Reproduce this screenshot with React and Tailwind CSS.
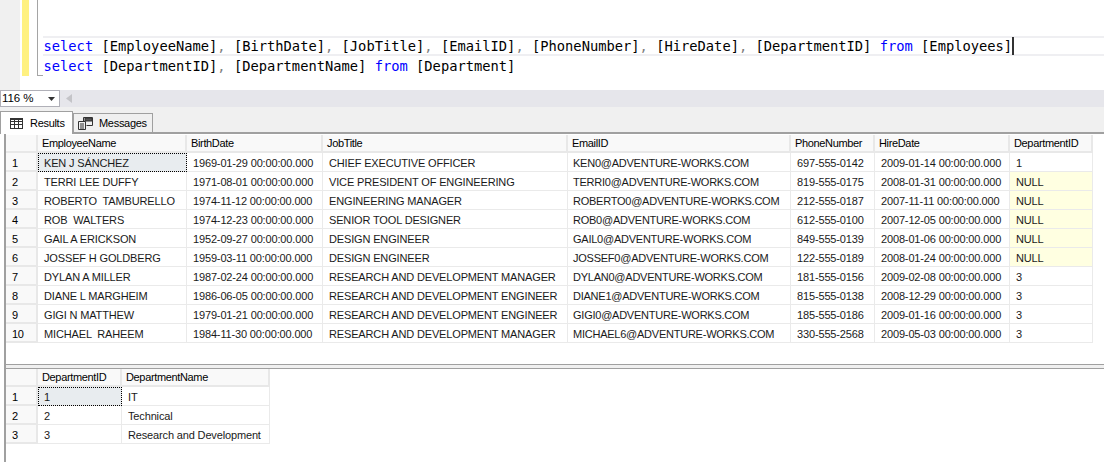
import React from "react";

const KW = "text-[#0000ff]";
const GRID_A = "grid grid-cols-[32px_149px_136px_245px_223px_84px_135px_83px]";
const GRID_B = "grid grid-cols-[32px_84px_148px]";

const employees = [
  ["KEN J SÁNCHEZ", "1969-01-29 00:00:00.000", "CHIEF EXECUTIVE OFFICER", "KEN0@ADVENTURE-WORKS.COM", "697-555-0142", "2009-01-14 00:00:00.000", "1"],
  ["TERRI LEE DUFFY", "1971-08-01 00:00:00.000", "VICE PRESIDENT OF ENGINEERING", "TERRI0@ADVENTURE-WORKS.COM", "819-555-0175", "2008-01-31 00:00:00.000", "NULL"],
  ["ROBERTO  TAMBURELLO", "1974-11-12 00:00:00.000", "ENGINEERING MANAGER", "ROBERTO0@ADVENTURE-WORKS.COM", "212-555-0187", "2007-11-11 00:00:00.000", "NULL"],
  ["ROB  WALTERS", "1974-12-23 00:00:00.000", "SENIOR TOOL DESIGNER", "ROB0@ADVENTURE-WORKS.COM", "612-555-0100", "2007-12-05 00:00:00.000", "NULL"],
  ["GAIL A ERICKSON", "1952-09-27 00:00:00.000", "DESIGN ENGINEER", "GAIL0@ADVENTURE-WORKS.COM", "849-555-0139", "2008-01-06 00:00:00.000", "NULL"],
  ["JOSSEF H GOLDBERG", "1959-03-11 00:00:00.000", "DESIGN ENGINEER", "JOSSEF0@ADVENTURE-WORKS.COM", "122-555-0189", "2008-01-24 00:00:00.000", "NULL"],
  ["DYLAN A MILLER", "1987-02-24 00:00:00.000", "RESEARCH AND DEVELOPMENT MANAGER", "DYLAN0@ADVENTURE-WORKS.COM", "181-555-0156", "2009-02-08 00:00:00.000", "3"],
  ["DIANE L MARGHEIM", "1986-06-05 00:00:00.000", "RESEARCH AND DEVELOPMENT ENGINEER", "DIANE1@ADVENTURE-WORKS.COM", "815-555-0138", "2008-12-29 00:00:00.000", "3"],
  ["GIGI N MATTHEW", "1979-01-21 00:00:00.000", "RESEARCH AND DEVELOPMENT ENGINEER", "GIGI0@ADVENTURE-WORKS.COM", "185-555-0186", "2009-01-16 00:00:00.000", "3"],
  ["MICHAEL  RAHEEM", "1984-11-30 00:00:00.000", "RESEARCH AND DEVELOPMENT MANAGER", "MICHAEL6@ADVENTURE-WORKS.COM", "330-555-2568", "2009-05-03 00:00:00.000", "3"],
];
const departments = [
  ["1", "IT"],
  ["2", "Technical"],
  ["3", "Research and Development"],
];

function HeaderCell({ children }) {
  return (
    <div className="h-[18px] pl-[4px] leading-[17px] tracking-[-0.35px] bg-[#f9f9f9] border-r-2 border-b-2 border-[#e8e8e8] whitespace-pre overflow-hidden">
      {children}
    </div>
  );
}

function RowHead({ children }) {
  return (
    <div className="h-[19px] pl-[6px] leading-[20px] bg-[#f9f9f9] border-r-2 border-b-2 border-[#e8e8e8] whitespace-pre overflow-hidden">
      {children}
    </div>
  );
}

function Cell({ children, active, nullCell, email }) {
  const bg = active ? "bg-[#e8ecef] outline-1 -outline-offset-1 outline-dotted outline-black" : nullCell ? "bg-[#ffffe1]" : "bg-white";
  const text = email ? "pl-[5px] tracking-[-0.24px]" : "pl-[6px] tracking-[-0.15px]";
  return (
    <div className={`h-[19px] leading-[20px] border-r border-b border-[#eaeaea] whitespace-pre overflow-hidden text-[#1a1a1a] ${text} ${bg}`}>
      {children}
    </div>
  );
}

function Grid({ cols, headers, rows }) {
  return (
    <div className={`${cols} w-max`}>
      <HeaderCell />
      {headers.map((h) => (
        <HeaderCell key={h}>{h}</HeaderCell>
      ))}
      {rows.map((row, i) => (
        <React.Fragment key={i}>
          <RowHead>{i + 1}</RowHead>
          {row.map((c, j) => (
            <Cell key={j} active={i === 0 && j === 0} nullCell={c === "NULL"} email={c.includes("@")}>
              {c}
            </Cell>
          ))}
        </React.Fragment>
      ))}
    </div>
  );
}

export default function App() {
  return (
    <div className="w-[1104px] h-[462px] overflow-hidden bg-white flex flex-col text-[11px] tracking-[-0.3px] text-black font-['Liberation_Sans',Arial,sans-serif]">
      {/* Editor */}
      <div className="h-[90px] flex shrink-0">
        <div className="w-[20px] bg-[#f0f0f0]" />
        <div className="w-[2px] bg-white" />
        <div className="w-[7px] h-[76px] bg-[#fff181]" />
        <div className="w-[8px]" />
        <div className="w-[6px] h-[76px] border-l border-b border-[#a5a5a5]" />
        <div className="flex-1 pt-[36px] font-['DejaVu_Sans_Mono','Liberation_Mono',monospace] text-[13.75px] tracking-normal leading-[20px] text-black whitespace-pre">
          <div className="h-[20px] border-y-2 border-[#efeff2] pl-[0.5px] flex items-center">
            <span className={KW}>select</span>
            <span> [EmployeeName]<span className="text-[#808080]">,</span> [BirthDate]<span className="text-[#808080]">,</span> [JobTitle]<span className="text-[#808080]">,</span> [EmailID]<span className="text-[#808080]">,</span> [PhoneNumber]<span className="text-[#808080]">,</span> [HireDate]<span className="text-[#808080]">,</span> [DepartmentID] </span>
            <span className={KW}>from</span>
            <span> [Employees]</span>
            <span className="w-[2px] h-[18px] bg-[#333333]" />
          </div>
          <div className="h-[20px] pl-[0.5px] flex items-center">
            <span className={KW}>select</span>
            <span> [DepartmentID]<span className="text-[#808080]">,</span> [DepartmentName] </span>
            <span className={KW}>from</span>
            <span> [Department]</span>
          </div>
        </div>
      </div>

      {/* Zoom bar */}
      <div className="h-[17px] shrink-0 bg-[#e6e6eb] flex items-center">
        <div className="w-[60px] h-[17px] bg-white border border-[#b0b0b8] pl-[1px] flex items-center justify-between pr-[4px] text-[11.5px] tracking-[-0.1px]">
          <span>116 %</span>
          <svg width="7" height="4" viewBox="0 0 7 4"><path d="M0 0h7L3.5 4z" fill="#333" /></svg>
        </div>
        <svg className="ml-[6px]" width="6" height="9" viewBox="0 0 6 9"><path d="M6 0v9L0 4.5z" fill="#c4c4c8" /></svg>
      </div>

      {/* Tabs */}
      <div className="h-[25px] shrink-0 bg-[#f0f0f0] flex items-end border-b-2 border-[#a0a0a0] box-content -mb-px">
        <div className="w-[73px] h-[23px] bg-white border border-b-0 border-[#a0a0a0] flex items-center pl-[9px] gap-[7px] -mb-[2px] z-10">
          <svg width="13" height="11" viewBox="0 0 13 11" fill="none" stroke="#333"><rect x="0.5" y="0.5" width="12" height="10" /><path d="M0.5 3.5h12M0.5 6.5h12M4.5 0.5v10M8.5 0.5v10" /><path d="M0.5 1.5h12" /></svg>
          <span>Results</span>
        </div>
        <div className="w-[80px] h-[19px] bg-[#f0f0f0] border border-b-0 border-[#a0a0a0] flex items-center pl-[4px] gap-[6px]">
          <svg width="15" height="13" viewBox="0 0 15 13" fill="none" stroke="#333"><path d="M0.5 4.5h7v8h-7z" /><path d="M2 7h4M2 9h4M2 11h4" /><path d="M5.5 4V0.5h9v8h-6" /><path d="M7 1h7v3H7z" fill="#555" /></svg>
          <span>Messages</span>
        </div>
      </div>

      {/* Results pane */}
      <div className="flex-1 flex flex-col border-l-2 border-[#a0a0a0] ml-[4px] min-h-0">
        <div className="h-[231px] shrink-0 pt-[2px] overflow-hidden">
          <Grid
            cols={GRID_A}
            headers={["EmployeeName", "BirthDate", "JobTitle", "EmailID", "PhoneNumber", "HireDate", "DepartmentID"]}
            rows={employees}
          />
        </div>
        <div className="h-[5px] shrink-0 border-y border-[#a0a0a0] bg-[#f0f0f0]" />
        <div>
          <Grid cols={GRID_B} headers={["DepartmentID", "DepartmentName"]} rows={departments} />
        </div>
      </div>
    </div>
  );
}
